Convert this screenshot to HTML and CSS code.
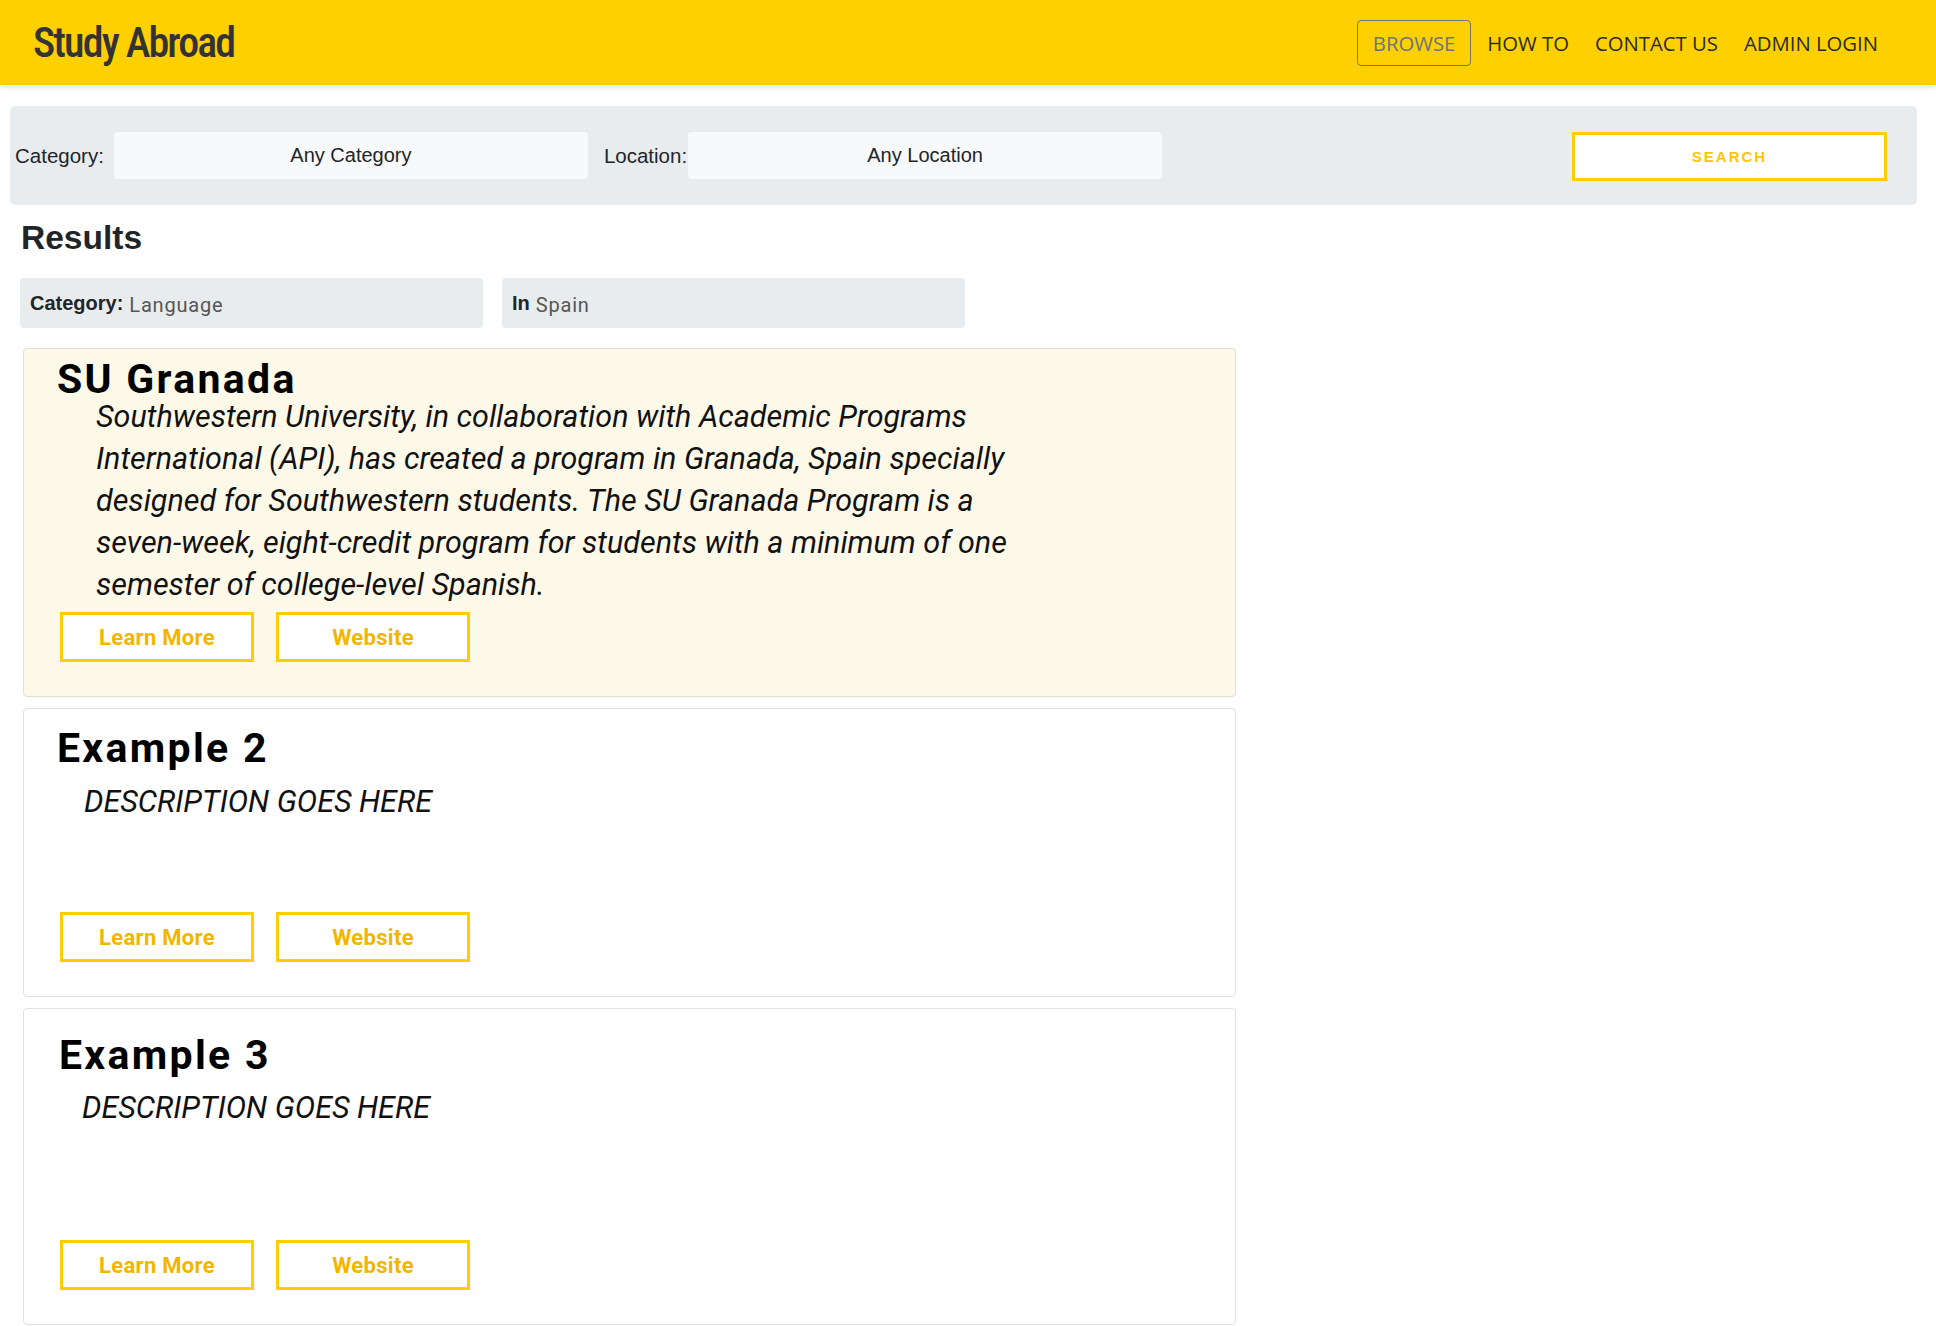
FILE: index.html
```html
<!DOCTYPE html>
<html lang="en">
<head>
<meta charset="utf-8">
<title>Study Abroad</title>
<link rel="stylesheet" href="styles.css">
</head>
<body>
<header class="topbar">
  <div class="brand">Study Abroad</div>
  <nav class="nav">
    <a class="nav-link nav-link-active" href="#">BROWSE</a>
    <a class="nav-link" href="#">HOW TO</a>
    <a class="nav-link" href="#">CONTACT US</a>
    <a class="nav-link" href="#">ADMIN LOGIN</a>
  </nav>
</header>

<main class="page">
  <form class="searchbar">
    <label class="field-label">Category:</label>
    <div class="select">Any Category</div>
    <label class="field-label field-label-loc">Location:</label>
    <div class="select select-loc">Any Location</div>
    <button type="button" class="search-btn">SEARCH</button>
  </form>

  <h2 class="results-title">Results</h2>

  <div class="chips">
    <div class="chip"><b class="chip-key">Category:</b> <span class="chip-val">Language</span></div>
    <div class="chip"><b class="chip-key">In</b> <span class="chip-val">Spain</span></div>
  </div>

  <div class="cards">
    <article class="card card-featured">
      <h3 class="card-title">SU Granada</h3>
      <p class="card-desc">Southwestern University, in collaboration with Academic Programs International (API), has created a program in Granada, Spain specially designed for Southwestern students. The SU Granada Program is a seven-week, eight-credit program for students with a minimum of one semester of college-level Spanish.</p>
      <div class="card-actions">
        <a class="btn-outline" href="#">Learn More</a>
        <a class="btn-outline" href="#">Website</a>
      </div>
    </article>

    <article class="card card-second">
      <h3 class="card-title">Example 2</h3>
      <p class="card-desc card-desc-short">DESCRIPTION GOES HERE</p>
      <div class="card-actions">
        <a class="btn-outline" href="#">Learn More</a>
        <a class="btn-outline" href="#">Website</a>
      </div>
    </article>

    <article class="card card-third">
      <h3 class="card-title">Example 3</h3>
      <p class="card-desc card-desc-short">DESCRIPTION GOES HERE</p>
      <div class="card-actions">
        <a class="btn-outline" href="#">Learn More</a>
        <a class="btn-outline" href="#">Website</a>
      </div>
    </article>
  </div>
</main>
</body>
</html>
```

FILE: styles.css
```css
* { box-sizing: border-box; }

html, body {
  margin: 0;
  padding: 0;
  background: #ffffff;
  font-family: "Liberation Sans", Arial, sans-serif;
  color: #212529;
}

a { text-decoration: none; }

/* ---------- top bar ---------- */
.topbar {
  height: 85px;
  background: #ffd000;
  display: flex;
  align-items: center;
  justify-content: space-between;
  padding: 0 45px 0 33px;
  box-shadow: 0 2px 6px rgba(0, 0, 0, 0.13);
  position: relative;
}

.brand {
  font-family: "Roboto Condensed", "DejaVu Sans Condensed", sans-serif;
  font-stretch: condensed;
  font-weight: 500;
  font-size: 42px;
  letter-spacing: -1.9px;
  color: #333333;
  line-height: 1;
  margin-top: 1px;
}

.nav {
  display: flex;
  align-items: center;
  gap: 0;
}

.nav-link {
  font-family: "Open Sans", sans-serif;
  font-size: 20.3px;
  color: #2b2b2b;
  padding: 0 13px;
  line-height: 44px;
}

.nav-link-active {
  color: #6c757d;
  border: 1px solid #6c757d;
  border-radius: 4px;
  padding: 0 15px;
  margin-right: 3px;
}

/* ---------- search bar ---------- */
.searchbar {
  margin: 21px 19px 0 10px;
  height: 99px;
  background: #e9ecef;
  border-radius: 5px;
  display: flex;
  align-items: center;
  padding: 0 30px 0 5px;
}

.field-label {
  font-size: 20.5px;
  color: #212529;
  margin-right: 10px;
}

.field-label-loc {
  margin-left: 16px;
  margin-right: 1px;
}

.select {
  width: 474px;
  height: 47px;
  background: #f8f9fa;
  border-radius: 4px;
  display: flex;
  align-items: center;
  justify-content: center;
  font-size: 20px;
  color: #212529;
}

.search-btn {
  margin-left: auto;
  width: 315px;
  height: 49px;
  background: #ffffff;
  border: 3px solid #ffcf00;
  font-family: "Liberation Sans", Arial, sans-serif;
  font-weight: 700;
  font-size: 15px;
  letter-spacing: 2px;
  color: #ffc600;
  margin-top: 1px;
}

/* ---------- results ---------- */
.results-title {
  margin: 13px 0 0 21px;
  font-family: "Liberation Sans", Arial, sans-serif;
  font-weight: 700;
  font-size: 33.5px;
  line-height: 40px;
  color: #212529;
}

.chips {
  display: flex;
  gap: 19px;
  margin: 20px 0 0 20px;
}

.chip {
  width: 463px;
  height: 50px;
  background: #e9ecef;
  border-radius: 4px;
  display: flex;
  align-items: center;
  padding-left: 10px;
  gap: 6px;
}

.chip-key {
  font-family: "Liberation Sans", Arial, sans-serif;
  font-weight: 700;
  font-size: 20px;
  color: #212529;
}

.chip-val {
  font-family: Roboto, sans-serif;
  font-size: 20px;
  color: #555555;
  letter-spacing: 0.8px;
  margin-top: 3px;
}

/* ---------- cards ---------- */
.cards {
  margin: 20px 0 0 23px;
  width: 1213px;
  display: flex;
  flex-direction: column;
  gap: 11px;
}

.card {
  border: 1.5px solid #e2e2e2;
  border-radius: 4px;
  background: #ffffff;
  padding: 10px 33px 34px;
}

.card-featured {
  background: #fdf9e9;
  border-color: #e3e0d2;
}

.card-title {
  margin: 0;
  font-family: Roboto, sans-serif;
  font-weight: 700;
  font-size: 41px;
  line-height: 40px;
  color: #000000;
  letter-spacing: 2.3px;
}

.card-desc {
  margin: -3px 0 6px 39px;
  max-width: 955px;
  font-family: Roboto, sans-serif;
  font-style: italic;
  font-size: 30.5px;
  line-height: 42px;
  color: #111111;
}

.card-desc-short {
  margin-left: 27px;
}

.card-second .card-title { margin-top: 9px; }
.card-second .card-desc { margin-top: 13px; margin-bottom: 89px; }

.card-third .card-title { margin-top: 16px; margin-left: 2px; }
.card-third .card-desc { margin-top: 12px; margin-bottom: 111px; margin-left: 25px; }

.card-actions {
  display: flex;
  gap: 22px;
  margin-left: 3px;
}

.btn-outline {
  width: 194px;
  height: 50px;
  border: 3px solid #ffcd00;
  background: #ffffff;
  display: flex;
  align-items: center;
  justify-content: center;
  font-family: Roboto, sans-serif;
  font-weight: 700;
  font-size: 22px;
  color: #f3b500;
  letter-spacing: 0.3px;
}
```
